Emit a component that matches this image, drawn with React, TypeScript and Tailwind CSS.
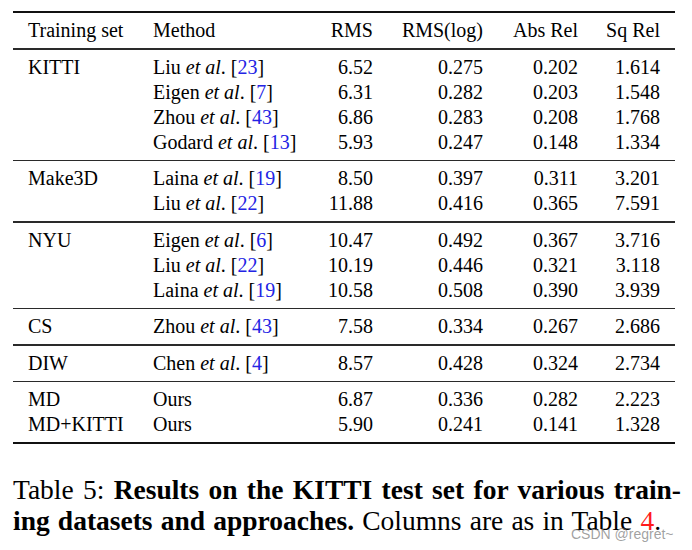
import React from "react";

type Cite = { name: string; ref?: string; plain?: boolean };
type Row = { method: Cite; vals: [string, string, string, string] };
type Group = { set: string; rows: Row[] };

const groups: Group[] = [
  {
    set: "KITTI",
    rows: [
      { method: { name: "Liu", ref: "23" }, vals: ["6.52", "0.275", "0.202", "1.614"] },
      { method: { name: "Eigen", ref: "7" }, vals: ["6.31", "0.282", "0.203", "1.548"] },
      { method: { name: "Zhou", ref: "43" }, vals: ["6.86", "0.283", "0.208", "1.768"] },
      { method: { name: "Godard", ref: "13" }, vals: ["5.93", "0.247", "0.148", "1.334"] },
    ],
  },
  {
    set: "Make3D",
    rows: [
      { method: { name: "Laina", ref: "19" }, vals: ["8.50", "0.397", "0.311", "3.201"] },
      { method: { name: "Liu", ref: "22" }, vals: ["11.88", "0.416", "0.365", "7.591"] },
    ],
  },
  {
    set: "NYU",
    rows: [
      { method: { name: "Eigen", ref: "6" }, vals: ["10.47", "0.492", "0.367", "3.716"] },
      { method: { name: "Liu", ref: "22" }, vals: ["10.19", "0.446", "0.321", "3.118"] },
      { method: { name: "Laina", ref: "19" }, vals: ["10.58", "0.508", "0.390", "3.939"] },
    ],
  },
  {
    set: "CS",
    rows: [{ method: { name: "Zhou", ref: "43" }, vals: ["7.58", "0.334", "0.267", "2.686"] }],
  },
  {
    set: "DIW",
    rows: [{ method: { name: "Chen", ref: "4" }, vals: ["8.57", "0.428", "0.324", "2.734"] }],
  },
];

const grid = "grid grid-cols-[125px_167px_53px_110px_95px_82px] px-[15px] h-[25px] leading-[25px]";

function Method({ m }: { m: Cite }) {
  if (m.plain) return <span>{m.name}</span>;
  return (
    <span className="whitespace-nowrap">
      {m.name} <span className="italic">et al</span>. [<span className="text-[#2323e4]">{m.ref}</span>]
    </span>
  );
}

function DataRow({ set, method, vals }: { set: string; method: React.ReactNode; vals: string[] }) {
  return (
    <div className={grid}>
      <div className="whitespace-nowrap">{set}</div>
      <div>{method}</div>
      {vals.map((v, i) => (
        <div key={i} className="text-right whitespace-nowrap">
          {v}
        </div>
      ))}
    </div>
  );
}

function MidRule() {
  return <div className="h-[1.5px] bg-[#2a2a2a]" />;
}

export default function App() {
  return (
    <div className="relative w-[692px] h-[550px] overflow-hidden bg-white text-black font-['Liberation_Serif',serif]">
      <div className="ml-[13px] w-[662px] pt-[11px] text-[20px]">
        <div className="h-[2px] bg-[#111]" />
        <div className="pt-[5px] pb-[5px]">
          <DataRow set="Training set" method={<span>Method</span>} vals={["RMS", "RMS(log)", "Abs Rel", "Sq Rel"]} />
        </div>
        <MidRule />
        {groups.map((g, gi) => (
          <React.Fragment key={gi}>
            <div className="pt-[5px] pb-[5px]">
              {g.rows.map((r, ri) => (
                <DataRow key={ri} set={ri === 0 ? g.set : ""} method={<Method m={r.method} />} vals={r.vals} />
              ))}
            </div>
            <MidRule />
          </React.Fragment>
        ))}
        <div className="pt-[5px] pb-[5px]">
          <DataRow set="MD" method={<span>Ours</span>} vals={["6.87", "0.336", "0.282", "2.223"]} />
          <DataRow set="MD+KITTI" method={<span>Ours</span>} vals={["5.90", "0.241", "0.141", "1.328"]} />
        </div>
        <div className="h-[2px] bg-[#111]" />
      </div>

      <div className="ml-[13px] mt-[30px] w-[668px] text-[27.5px] leading-[31px]">
        <div className="text-justify [text-align-last:justify]">
          Table 5: <span className="font-bold">Results on the KITTI test set for various train-</span>
        </div>
        <div className="w-[648px] text-justify [text-align-last:justify]">
          <span className="font-bold">ing datasets and approaches.</span> Columns are as in Table{" "}
          <span className="text-[#ff1a1a]">4</span>.
        </div>
      </div>

      <div className="absolute left-[571px] top-[526px] text-[14px] leading-[16px] font-['Liberation_Sans',sans-serif] text-[rgba(120,120,120,0.7)] whitespace-nowrap">
        CSDN @regret~
      </div>
    </div>
  );
}
